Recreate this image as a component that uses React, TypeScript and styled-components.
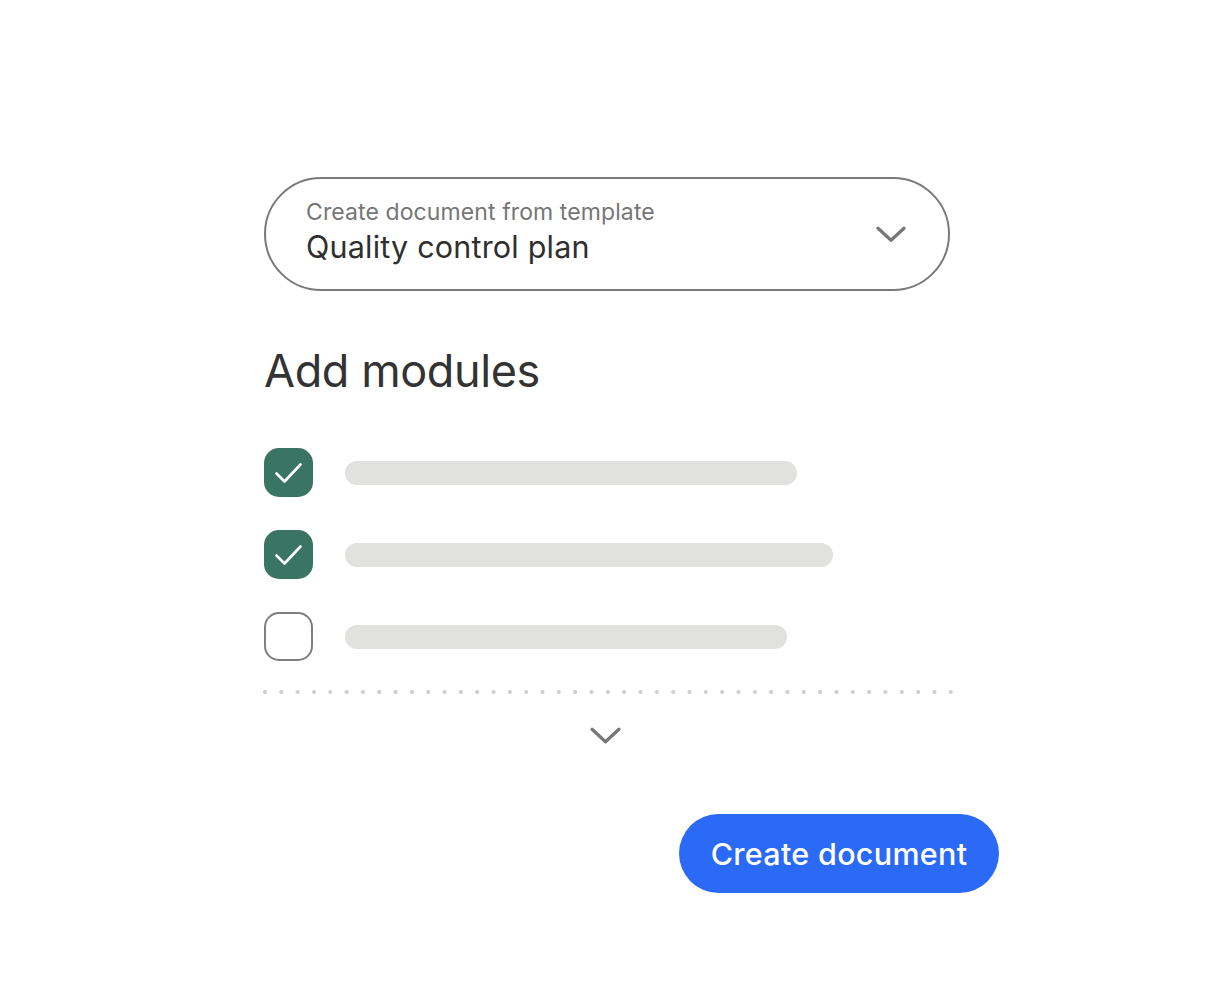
import React, {useState} from "react";
import styled, {createGlobalStyle} from "styled-components";

const GlobalStyle = createGlobalStyle`
  html, body {
    margin: 0;
    padding: 0;
    background: #ffffff;
    font-family: Inter, "Noto Sans", "Liberation Sans", sans-serif;
  }
`;

const Page = styled.div`
  display: flex;
  justify-content: flex-start;
  padding: 177px 0 0 264px;
`;

const Panel = styled.div`
  width: 735px;
  display: flex;
  flex-direction: column;
`;

const Select = styled.div`
  box-sizing: border-box;
  width: 686px;
  height: 114px;
  border: 2px solid #7a7a7a;
  border-radius: 57px;
  display: flex;
  align-items: center;
  justify-content: space-between;
  padding: 0 42px 0 40px;
  cursor: pointer;
`;

const SelectText = styled.div`
  display: flex;
  flex-direction: column;
  gap: 2px;
  margin-top: -5px;
`;

const SelectLabel = styled.span`
  font-size: 23px;
  color: #767676;
  line-height: 28px;
  letter-spacing: 0.1px;
`;

const SelectValue = styled.span`
  font-size: 30.5px;
  color: #2f2f2f;
  line-height: 38px;
  letter-spacing: 0.2px;
`;

const Heading = styled.h2`
  margin: 53px 0 0;
  font-size: 45px;
  font-weight: 400;
  color: #333333;
  line-height: 54px;
  letter-spacing: -0.4px;
`;

const List = styled.div`
  margin-top: 50px;
  display: flex;
  flex-direction: column;
  gap: 33px;
`;

const Row = styled.div`
  display: flex;
  align-items: center;
  gap: 32px;
`;

const Box = styled.button<{ $checked: boolean }>`
  box-sizing: border-box;
  width: 49px;
  height: 49px;
  padding: 0;
  border-radius: 15px;
  border: ${p => (p.$checked ? "none" : "2px solid #7f7f7f")};
  background: ${p => (p.$checked ? "#3a7463" : "#ffffff")};
  display: flex;
  align-items: center;
  justify-content: center;
  cursor: pointer;
`;

const Bar = styled.div<{ $width: number }>`
  height: 24px;
  width: ${p => p.$width}px;
  border-radius: 12px;
  background: #e1e1df;
`;

const Dots = styled.div`
  margin-top: 29px;
  width: 690px;
  margin-left: -1px;
  height: 4px;
  background-image: radial-gradient(circle at 2px 2px, #cfcfcf 1.8px, transparent 2.2px);
  background-size: 16.33px 4px;
  background-repeat: repeat-x;
`;

const More = styled.div`
  width: 683px;
  display: flex;
  justify-content: center;
  margin-top: 33px;
`;

const Footer = styled.div`
  display: flex;
  justify-content: flex-end;
  margin-top: 70px;
`;

const CreateButton = styled.button`
  width: 320px;
  height: 79px;
  border: none;
  border-radius: 40px;
  background: #2b6af6;
  color: #ffffff;
  font-family: Inter, "Noto Sans", "Liberation Sans", sans-serif;
  font-size: 30.5px;
  font-weight: 500;
  letter-spacing: 0.3px;
  cursor: pointer;
`;

const Chevron = ({width}: { width: number }) => (
  <svg width={width} height={width * 0.55} viewBox="0 0 30 16" fill="none">
    <path d="M2 2 L15 14 L28 2" stroke="#777777" strokeWidth="3.2" strokeLinecap="round" strokeLinejoin="round"/>
  </svg>
);

const Check = () => (
  <svg width="49" height="49" viewBox="0 0 49 49" fill="none">
    <path d="M12.5 25.5 L20.5 33.5 L36.5 16.5" stroke="#ffffff" strokeWidth="2.6" strokeLinecap="round" strokeLinejoin="round"/>
  </svg>
);

const modules = [
  {id: 1, width: 452, checked: true},
  {id: 2, width: 488, checked: true},
  {id: 3, width: 442, checked: false},
];

export default function App() {
  const [items, setItems] = useState(modules);
  const toggle = (id: number) =>
    setItems(items.map(m => (m.id === id ? {...m, checked: !m.checked} : m)));
  return (
    <>
      <GlobalStyle/>
      <Page>
        <Panel>
          <Select>
            <SelectText>
              <SelectLabel>Create document from template</SelectLabel>
              <SelectValue>Quality control plan</SelectValue>
            </SelectText>
            <Chevron width={30}/>
          </Select>
          <Heading>Add modules</Heading>
          <List>
            {items.map(m => (
              <Row key={m.id}>
                <Box $checked={m.checked} onClick={() => toggle(m.id)}>
                  {m.checked && <Check/>}
                </Box>
                <Bar $width={m.width}/>
              </Row>
            ))}
          </List>
          <Dots/>
          <More>
            <Chevron width={31}/>
          </More>
          <Footer>
            <CreateButton>Create document</CreateButton>
          </Footer>
        </Panel>
      </Page>
    </>
  );
}
